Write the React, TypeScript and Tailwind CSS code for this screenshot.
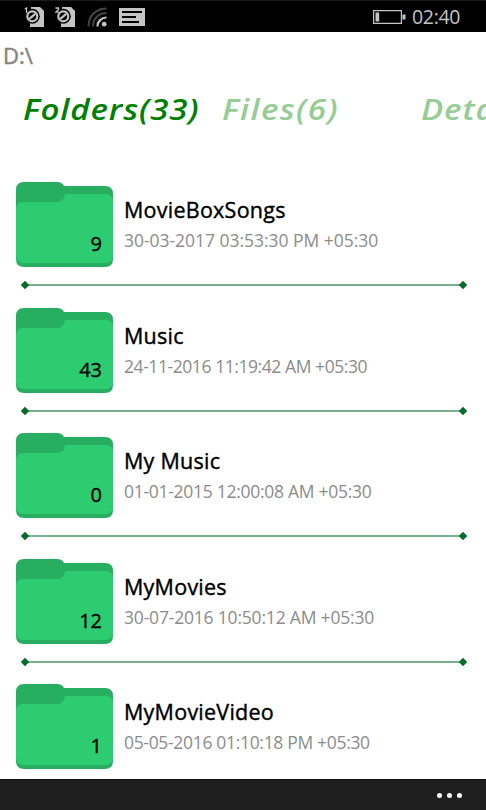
type Folder = {
    name: string;
    date: string;
    count: number;
    tracking: string;
};

const folders: Folder[] = [
    { name: "MovieBoxSongs", date: "30-03-2017 03:53:30 PM +05:30", count: 9, tracking: "tracking-[-0.03px]" },
    { name: "Music", date: "24-11-2016 11:19:42 AM +05:30", count: 43, tracking: "tracking-[-0.43px]" },
    { name: "My Music", date: "01-01-2015 12:00:08 AM +05:30", count: 0, tracking: "tracking-[-0.28px]" },
    { name: "MyMovies", date: "30-07-2016 10:50:12 AM +05:30", count: 12, tracking: "tracking-[-0.19px]" },
    { name: "MyMovieVideo", date: "05-05-2016 01:10:18 PM +05:30", count: 1, tracking: "tracking-[-0.32px]" },
];

function SimIcon({ slot }: { slot: number }) {
    return (
        <svg className="w-5 h-5" viewBox="0 0 20 20" fill="none">
            <path d="M6 0h10l4 4v16H6z" fill="#c4c4c4" />
            <circle cx="8.3" cy="9.3" r="7.5" fill="#000" />
            <path d="M0 0h7v14H0z" fill="#000" />
            <circle cx="8.3" cy="9.3" r="5" stroke="#c4c4c4" strokeWidth="2.2" />
            <path d="M5.3 11.8l6-5" stroke="#c4c4c4" strokeWidth="2.2" />
            <path d={slot === 1 ? "M0.8 2l1.7-1v5" : "M0.5 1h3v1.8l-2.8 2.4h3"} stroke="#c4c4c4" strokeWidth="1.3" />
        </svg>
    );
}

function StatusBar() {
    return (
        <header className="flex h-8 shrink-0 items-center border-t border-[#1c1c1c] bg-black pr-[25px] pl-6">
            <SimIcon slot={1} />
            <span className="w-[11px]" />
            <SimIcon slot={2} />
            <svg className="ml-[12px] h-5 w-5" viewBox="0 0 20 20" fill="none">
                <path d="M1.5 19.5C1.5 9 9 1.5 19.5 1.5M6 19.5C6 11.5 11.5 6 19.5 6" stroke="#454545" strokeWidth="2" />
                <path d="M10.5 19.5c0-5 4-9 9-9" stroke="#c4c4c4" strokeWidth="2.2" />
                <circle cx="17.2" cy="17.2" r="2.4" fill="#c4c4c4" />
            </svg>
            <svg className="ml-[12px] h-[18px] w-[26px]" viewBox="0 0 26 18">
                <path d="M0 0h26v18H0z" fill="#c4c4c4" />
                <path d="M3 4h20M3 9h14M3 14h17" stroke="#000" strokeWidth="2" />
            </svg>
            <svg className="ml-auto h-[14px] w-[33px]" viewBox="0 0 33 14" fill="none">
                <path d="M.6.6h27.8v12.8H.6z" stroke="#c4c4c4" strokeWidth="1.2" />
                <path d="M2.5 2.5h3.7v9H2.5zM29.5 4.5h3v5h-3z" fill="#c4c4c4" />
            </svg>
            <span className="ml-[6px] w-[49px] text-[19.5px] tracking-[-0.3px] whitespace-nowrap text-[#c4c4c4]">02:40</span>
        </header>
    );
}

function FolderIcon({ count }: { count: number }) {
    return (
        <div className="relative h-[85px] w-[97px] shrink-0">
            <svg className="size-full" viewBox="0 0 97 85">
                <path d="M0 8Q0 0 8 0H41Q46 0 48 4H89Q97 4 97 12V77Q97 85 89 85H8Q0 85 0 77Z" fill="#27ae60" />
                <path d="M0 26Q1 20 7 20H41Q48 20 49 12H90Q96 12 97 18V73Q97 81 89 81H8Q0 81 0 73Z" fill="#2ecc71" />
            </svg>
            <span className="absolute right-[11px] bottom-[9px] text-xl leading-7 text-black [-webkit-text-stroke:0.35px]">{count}</span>
        </div>
    );
}

function Divider() {
    return (
        <div className="mt-[14px] ml-[6px] flex h-2 w-[444px] items-center justify-between">
            <span className="size-[6px] shrink-0 rotate-45 bg-[#076b2c]" />
            <span className="h-[2px] flex-1 bg-[#7ab08c]" />
            <span className="size-[6px] shrink-0 rotate-45 bg-[#076b2c]" />
        </div>
    );
}

function FolderRow({ folder }: { folder: Folder }) {
    return (
        <li className="h-[125.5px] shrink-0">
            <div className="flex">
                <FolderIcon count={folder.count} />
                <div className="ml-[11px] pt-[13px] whitespace-nowrap">
                    <h2 className="text-[21.5px] leading-[30px] tracking-[0.25px] text-black [-webkit-text-stroke:0.4px]">{folder.name}</h2>
                    <p className={`mt-px text-[17.5px] leading-[28px] text-[#8c8c8c] ${folder.tracking}`}>{folder.date}</p>
                </div>
            </div>
            <Divider />
        </li>
    );
}

export default function App() {
    return (
        <main className="flex h-[810px] w-[486px] flex-col overflow-hidden bg-white font-['Open_Sans','Noto_Sans',sans-serif]">
            <StatusBar />
            <div className="h-[46px] shrink-0 pt-[7px] pl-[3px] text-[22px] leading-8 text-[#858585] [-webkit-text-stroke:0.5px]">D:\</div>

            {/* Pivot tabs, the last one runs off the screen */}
            <nav className="flex h-[104px] shrink-0 pt-[11px] pl-[23px] text-[29px] leading-10 font-semibold whitespace-nowrap text-[#96cd96] italic">
                <div className="w-[199px] shrink-0 text-[#008000]">
                    <span className="inline-block origin-left scale-x-[1.14] tracking-[0.75px]">Folders(33)</span>
                </div>
                <div className="w-[199px] shrink-0">
                    <span className="inline-block origin-left scale-x-[1.14] tracking-[1.2px]">Files(6)</span>
                </div>
                <div className="shrink-0">
                    <span className="inline-block origin-left scale-x-[1.14] tracking-[0.75px]">Deta</span>
                </div>
            </nav>

            <ul className="min-h-0 flex-1 overflow-hidden pl-4">
                {folders.map((folder) => (
                    <FolderRow key={folder.name} folder={folder} />
                ))}
            </ul>

            <footer className="flex h-[31px] shrink-0 items-center justify-end gap-[5px] border-t border-[#111] bg-[#1f1f1f] pr-6">
                <span className="size-[5px] rounded-full bg-white" />
                <span className="size-[5px] rounded-full bg-white" />
                <span className="size-[5px] rounded-full bg-white" />
            </footer>
        </main>
    );
}
